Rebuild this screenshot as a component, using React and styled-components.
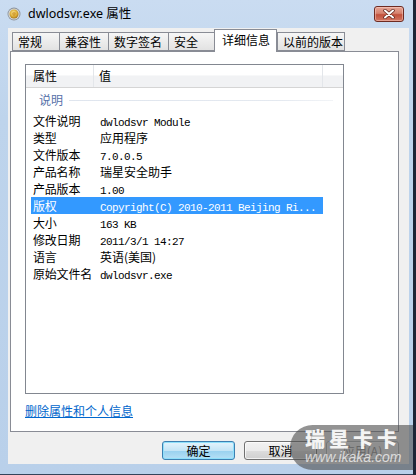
import React from 'react';
import styled, { createGlobalStyle } from 'styled-components';

const Global = createGlobalStyle`
  html, body { margin: 0; padding: 0; background: #1c2536; }
  body { width: 416px; height: 475px; overflow: hidden; font-family: "Noto Sans CJK SC", sans-serif; }
  * { box-sizing: border-box; }
`;

const Window = styled.div`
  position: relative;
  width: 413px;
  height: 475px;
  background: linear-gradient(180deg, #cadcf1 0%, #bed4ec 25%, #b9d0ea 100%);
  border-bottom: 1px solid #34435a;
  display: flex;
  flex-direction: column;
  overflow: hidden;
`;

const TitleBar = styled.div`
  height: 28px;
  display: flex;
  align-items: center;
  padding: 0 9px 0 7px;
`;

const Title = styled.span`
  margin-left: 7px;
  font-family: "Noto Sans", "Noto Sans CJK SC", sans-serif;
  font-size: 12.5px;
  color: #000;
  line-height: 16px;
`;

const CloseButton = styled.div`
  margin-left: auto;
  margin-top: -1px;
  width: 30px;
  height: 16px;
  border: 1px solid #6e2b22;
  border-radius: 3px;
  background: linear-gradient(180deg, #e6a595 0%, #d68370 45%, #c2513c 55%, #d27763 100%);
  display: flex;
  align-items: center;
  justify-content: center;
  box-shadow: inset 0 0 0 1px rgba(255, 220, 210, 0.45);
`;

const Client = styled.div`
  margin-left: 8px;
  width: 401px;
  height: 436px;
  background: #f0f0f0;
  padding: 1px 0 0 2px;
  display: flex;
  flex-direction: column;
`;

const TabStrip = styled.div`
  height: 22px;
  margin-left: 2px;
  display: flex;
  align-items: flex-end;
`;

const Tab = styled.div`
  position: relative;
  width: ${(p) => p.$w}px;
  height: ${(p) => (p.$active ? 23 : 19)}px;
  margin-bottom: ${(p) => (p.$active ? -1 : 0)}px;
  z-index: ${(p) => (p.$active ? 2 : 1)};
  border: 1px solid #898c95;
  border-bottom: ${(p) => (p.$active ? 'none' : '1px solid #898c95')};
  border-right: ${(p) => (p.$last || p.$active ? '1px solid #898c95' : 'none')};
  background: ${(p) =>
    p.$active ? '#ffffff' : 'linear-gradient(180deg, #f6f6f6 0%, #ececec 50%, #e2e2e2 100%)'};
  font-size: 12px;
  line-height: ${(p) => (p.$active ? 20 : 17)}px;
  padding-left: ${(p) => (p.$active ? 7 : 5)}px;
  color: #000;
  white-space: nowrap;
`;

const Panel = styled.div`
  width: 389px;
  height: 381px;
  border: 1px solid #898c95;
  background: #fff;
  padding: 12px 0 0 14px;
  display: flex;
  flex-direction: column;
`;

const ListBox = styled.div`
  width: 319px;
  height: 330px;
  border: 1px solid #828790;
  background: #fff;
  display: flex;
  flex-direction: column;
`;

const Header = styled.div`
  height: 23px;
  display: grid;
  grid-template-columns: 68px 229px 1fr;
  background: linear-gradient(180deg, #ffffff 0%, #ffffff 45%, #f1f2f4 50%, #f1f2f4 100%);
  border-bottom: 1px solid #d5d5d5;
`;

const HeaderCell = styled.div`
  font-size: 12px;
  line-height: 22px;
  padding-left: ${(p) => p.$pad}px;
  border-right: ${(p) => (p.$div ? '1px solid #e3e6ea' : 'none')};
  color: #000;
`;

const GroupRow = styled.div`
  height: 24px;
  display: flex;
  align-items: center;
  padding-left: 13px;
  padding-right: 10px;
  gap: 6px;
`;

const GroupLabel = styled.span`
  font-size: 12px;
  color: #5671a9;
  line-height: 16px;
`;

const GroupLine = styled.span`
  flex: 1;
  height: 1px;
  background: linear-gradient(90deg, #dfe5ee 0%, #e4e9f0 80%, #f2f4f7 100%);
`;

const Row = styled.div`
  margin-left: 5px;
  width: 292px;
  height: 17px;
  display: grid;
  grid-template-columns: 69px 1fr;
  background: ${(p) => (p.$sel ? '#3399ff' : 'transparent')};
  color: ${(p) => (p.$sel ? '#fff' : '#000')};
  font-size: 12px;
  line-height: 17px;
  white-space: nowrap;
  overflow: hidden;
`;

const NameCell = styled.span`
  padding-left: 2px;
  letter-spacing: -0.2px;
`;

const ValueCell = styled.span`
  overflow: hidden;
`;

const Mono = styled.span`
  font-family: "Liberation Mono", monospace;
  font-size: 11px;
  letter-spacing: -0.6px;
`;

const Link = styled.a`
  margin-top: 10px;
  font-size: 12px;
  line-height: 14px;
  color: #0066cc;
  text-decoration: underline;
  align-self: flex-start;
`;

const ButtonRow = styled.div`
  margin-top: 9px;
  width: 389px;
  display: flex;
  justify-content: flex-end;
  gap: 9px;
`;

const Button = styled.div`
  width: 73px;
  height: 19px;
  border-radius: 3px;
  font-size: 12px;
  line-height: 17px;
  text-align: center;
  color: ${(p) => (p.$disabled ? '#8a8a8a' : '#000')};
  border: 1px solid ${(p) => (p.$default ? '#3c7fb1' : p.$disabled ? '#adb2b5' : '#707070')};
  background: ${(p) =>
    p.$default
      ? 'linear-gradient(180deg, #e5f4fc 0%, #c4e5f6 50%, #98d1ef 51%, #b6e0f5 100%)'
      : p.$disabled
      ? '#f4f4f4'
      : 'linear-gradient(180deg, #f2f2f2 0%, #ebebeb 50%, #dddddd 51%, #cfcfcf 100%)'};
  box-shadow: ${(p) =>
    p.$default ? 'inset 0 0 0 1px #8fe0fa' : 'inset 0 0 0 1px rgba(255,255,255,0.7)'};
`;

const Watermark = styled.div`
  position: absolute;
  left: 290px;
  top: 425px;
  width: 140px;
  height: 45px;
  border-radius: 23px 0 0 23px;
  background: rgba(80, 80, 80, 0.62);
  padding: 3px 0 0 15px;
  display: flex;
  flex-direction: column;
  pointer-events: none;
`;

const MarkTitle = styled.span`
  font-family: "Noto Sans CJK SC", sans-serif;
  font-weight: 900;
  font-size: 20px;
  letter-spacing: 4px;
  line-height: 22px;
  color: rgba(255, 255, 255, 0.92);
`;

const MarkUrl = styled.span`
  font-family: "Liberation Sans", sans-serif;
  font-style: italic;
  font-size: 14px;
  line-height: 15px;
  color: rgba(235, 235, 235, 0.85);
`;

const AppIcon = () => (
  <svg width="14" height="14" viewBox="0 0 14 14">
    <defs>
      <radialGradient id="ig" cx="0.45" cy="0.4" r="0.6">
        <stop offset="0" stopColor="#fff1a8" />
        <stop offset="0.6" stopColor="#e0b23a" />
        <stop offset="1" stopColor="#a8781c" />
      </radialGradient>
    </defs>
    <circle cx="7" cy="7" r="6.5" fill="#8d9399" />
    <circle cx="7" cy="7" r="5.6" fill="#d6d9dc" />
    <circle cx="7" cy="7" r="4.5" fill="url(#ig)" />
    <path d="M5 6.2 Q7 4 9 6.2 Q8.4 9 7 9.5 Q5.6 9 5 6.2Z" fill="#c98c1e" opacity="0.7" />
  </svg>
);

const CloseX = () => (
  <svg width="14" height="10" viewBox="0 0 14 10">
    <path d="M3 1.5 L11 8.5 M11 1.5 L3 8.5" stroke="#5a2018" strokeWidth="3.4" strokeLinecap="round" />
    <path d="M3 1.5 L11 8.5 M11 1.5 L3 8.5" stroke="#ffffff" strokeWidth="2" strokeLinecap="round" />
  </svg>
);

const tabs = [
  { label: '常规', w: 47 },
  { label: '兼容性', w: 49 },
  { label: '数字签名', w: 60 },
  { label: '安全', w: 46 },
  { label: '详细信息', w: 63, active: true },
  { label: '以前的版本', w: 68, last: true },
];

const rows = [
  { name: '文件说明', value: 'dwlodsvr Module', mono: true },
  { name: '类型', value: '应用程序' },
  { name: '文件版本', value: '7.0.0.5', mono: true },
  { name: '产品名称', value: '瑞星安全助手' },
  { name: '产品版本', value: '1.00', mono: true },
  { name: '版权', value: 'Copyright(C) 2010-2011 Beijing Ri...', mono: true, sel: true },
  { name: '大小', value: '163 KB', mono: true },
  { name: '修改日期', value: '2011/3/1 14:27', mono: true },
  { name: '语言', value: '英语(美国)' },
  { name: '原始文件名', value: 'dwlodsvr.exe', mono: true },
];

export default function App() {
  return (
    <>
      <Global />
      <Window>
        <TitleBar>
          <AppIcon />
          <Title>dwlodsvr.exe 属性</Title>
          <CloseButton>
            <CloseX />
          </CloseButton>
        </TitleBar>
        <Client>
          <TabStrip>
            {tabs.map((t) => (
              <Tab key={t.label} $w={t.w} $active={t.active} $last={t.last}>
                {t.label}
              </Tab>
            ))}
          </TabStrip>
          <Panel>
            <ListBox>
              <Header>
                <HeaderCell $pad={7} $div>属性</HeaderCell>
                <HeaderCell $pad={5} $div>值</HeaderCell>
                <HeaderCell $pad={0} />
              </Header>
              <GroupRow>
                <GroupLabel>说明</GroupLabel>
                <GroupLine />
              </GroupRow>
              {rows.map((r) => (
                <Row key={r.name} $sel={r.sel}>
                  <NameCell>{r.name}</NameCell>
                  <ValueCell>{r.mono ? <Mono>{r.value}</Mono> : r.value}</ValueCell>
                </Row>
              ))}
            </ListBox>
            <Link href="#">删除属性和个人信息</Link>
          </Panel>
          <ButtonRow>
            <Button $default>确定</Button>
            <Button>取消</Button>
            <Button $disabled>应用(A)</Button>
          </ButtonRow>
        </Client>
        <Watermark>
          <MarkTitle>瑞星卡卡</MarkTitle>
          <MarkUrl>www.ikaka.com</MarkUrl>
        </Watermark>
      </Window>
    </>
  );
}
